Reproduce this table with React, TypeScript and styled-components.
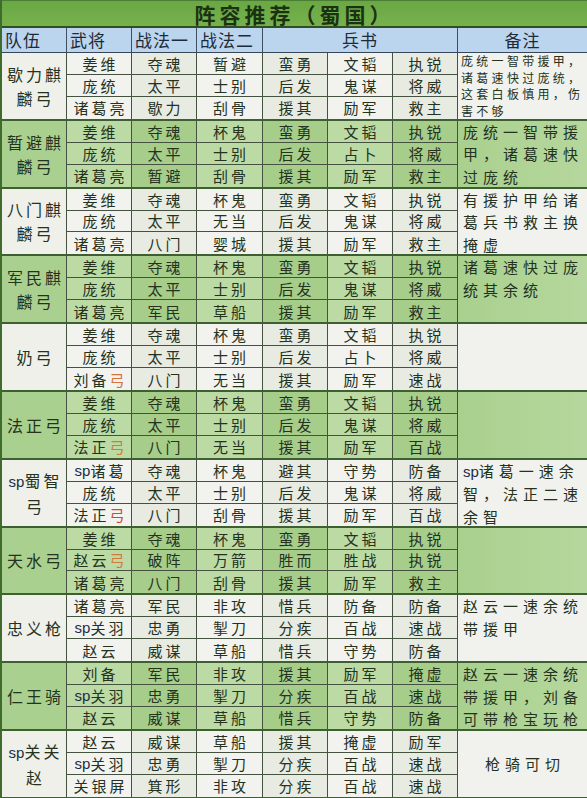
import React from 'react'
import styled, { createGlobalStyle } from 'styled-components'

const GlobalStyle = createGlobalStyle`
  html, body {
    margin: 0;
    padding: 0;
    background: #f1f2ed;
  }
  body {
    font-family: 'Noto Sans CJK SC', 'Noto Sans', sans-serif;
  }
`

const COLS = '65px 65px 65px 66px 65px 65px 65px 1fr'

type Tone = 'white' | 'green'

type Squad = {
  team: string[]
  tone: Tone
  rows: string[][]
  note?: string[]
  noteSmall?: boolean
  noteCenter?: boolean
}

const squads: Squad[] = [
  {
    team: ['歇力麒', '麟弓'],
    tone: 'white',
    rows: [
      ['姜维', '夺魂', '暂避', '蛮勇', '文韬', '执锐'],
      ['庞统', '太平', '士别', '后发', '鬼谋', '将威'],
      ['诸葛亮', '歇力', '刮骨', '援其', '励军', '救主'],
    ],
    note: ['庞统一智带援甲，', '诸葛速快过庞统，', '这套白板慎用，伤', '害不够'],
    noteSmall: true,
  },
  {
    team: ['暂避麒', '麟弓'],
    tone: 'green',
    rows: [
      ['姜维', '夺魂', '杯鬼', '蛮勇', '文韬', '执锐'],
      ['庞统', '太平', '士别', '后发', '占卜', '将威'],
      ['诸葛亮', '暂避', '刮骨', '援其', '励军', '救主'],
    ],
    note: ['庞统一智带援', '甲，诸葛速快', '过庞统'],
  },
  {
    team: ['八门麒', '麟弓'],
    tone: 'white',
    rows: [
      ['姜维', '夺魂', '杯鬼', '蛮勇', '文韬', '执锐'],
      ['庞统', '太平', '无当', '后发', '鬼谋', '将威'],
      ['诸葛亮', '八门', '婴城', '援其', '励军', '救主'],
    ],
    note: ['有援护甲给诸', '葛兵书救主换', '掩虚'],
  },
  {
    team: ['军民麒', '麟弓'],
    tone: 'green',
    rows: [
      ['姜维', '夺魂', '杯鬼', '蛮勇', '文韬', '执锐'],
      ['庞统', '太平', '士别', '后发', '鬼谋', '将威'],
      ['诸葛亮', '军民', '草船', '援其', '励军', '救主'],
    ],
    note: ['诸葛速快过庞', '统其余统'],
  },
  {
    team: ['奶弓'],
    tone: 'white',
    rows: [
      ['姜维', '夺魂', '杯鬼', '蛮勇', '文韬', '执锐'],
      ['庞统', '太平', '士别', '后发', '占卜', '将威'],
      ['刘备弓', '八门', '无当', '援其', '励军', '速战'],
    ],
  },
  {
    team: ['法正弓'],
    tone: 'green',
    rows: [
      ['姜维', '夺魂', '杯鬼', '蛮勇', '文韬', '执锐'],
      ['庞统', '太平', '士别', '后发', '鬼谋', '将威'],
      ['法正弓', '八门', '无当', '援其', '励军', '百战'],
    ],
  },
  {
    team: ['sp蜀智', '弓'],
    tone: 'white',
    rows: [
      ['sp诸葛', '夺魂', '杯鬼', '避其', '守势', '防备'],
      ['庞统', '太平', '士别', '后发', '鬼谋', '将威'],
      ['法正弓', '八门', '刮骨', '援其', '励军', '百战'],
    ],
    note: ['sp诸葛一速余', '智，法正二速', '余智'],
  },
  {
    team: ['天水弓'],
    tone: 'green',
    rows: [
      ['姜维', '夺魂', '杯鬼', '蛮勇', '文韬', '执锐'],
      ['赵云弓', '破阵', '万箭', '胜而', '胜战', '执锐'],
      ['诸葛亮', '八门', '刮骨', '援其', '励军', '救主'],
    ],
  },
  {
    team: ['忠义枪'],
    tone: 'white',
    rows: [
      ['诸葛亮', '军民', '非攻', '惜兵', '防备', '防备'],
      ['sp关羽', '忠勇', '掣刀', '分疾', '百战', '速战'],
      ['赵云', '威谋', '草船', '惜兵', '守势', '防备'],
    ],
    note: ['赵云一速余统', '带援甲'],
  },
  {
    team: ['仁王骑'],
    tone: 'green',
    rows: [
      ['刘备', '军民', '非攻', '援其', '励军', '掩虚'],
      ['sp关羽', '忠勇', '掣刀', '分疾', '百战', '速战'],
      ['赵云', '威谋', '草船', '惜兵', '守势', '防备'],
    ],
    note: ['赵云一速余统', '带援甲，刘备', '可带枪宝玩枪'],
  },
  {
    team: ['sp关关', '赵'],
    tone: 'white',
    rows: [
      ['赵云', '威谋', '草船', '援其', '掩虚', '励军'],
      ['sp关羽', '忠勇', '掣刀', '分疾', '百战', '速战'],
      ['关银屏', '箕形', '非攻', '分疾', '百战', '速战'],
    ],
    note: ['枪骑可切'],
    noteCenter: true,
  },
]

const Page = styled.div`
  width: 587px;
  height: 798px;
  display: flex;
  flex-direction: column;
  overflow: hidden;
  border-left: 2px solid #3f6b2c;
  box-sizing: border-box;
  color: #24321e;
`

const TitleBar = styled.div`
  height: 28px;
  flex: none;
  box-sizing: border-box;
  display: flex;
  align-items: center;
  justify-content: center;
  background: linear-gradient(#6aa843, #76b14c);
  border-top: 1px solid #4c7d34;
  border-bottom: 2px solid #2f4f22;
  font-size: 21px;
  line-height: 24px;
  font-weight: 700;
  letter-spacing: 4px;
  color: #1b3212;
`

const HeaderRow = styled.div`
  height: 25px;
  flex: none;
  box-sizing: border-box;
  display: grid;
  grid-template-columns: ${COLS};
  background: #bcd5ee;
  border-bottom: 1px solid #36475a;
`

const HeadCell = styled.div<{ $span?: number; $center?: boolean }>`
  grid-column: span ${(p) => p.$span ?? 1};
  display: flex;
  align-items: center;
  justify-content: ${(p) => (p.$center ? 'center' : 'flex-start')};
  padding-left: ${(p) => (p.$center ? '0' : '3px')};
  border-right: 1px solid #3e4f60;
  font-size: 17px;
  line-height: 20px;
  letter-spacing: 1px;
  color: #1d2b38;
  &:last-child {
    border-right: none;
  }
`

const Group = styled.div`
  height: 67.8px;
  flex: none;
  box-sizing: border-box;
  display: grid;
  grid-template-columns: ${COLS};
  grid-template-rows: repeat(3, minmax(0, 1fr));
  border-bottom: 2px solid #3d5f31;
`

const TeamCell = styled.div<{ $tone: Tone }>`
  grid-row: 1 / span 3;
  grid-column: 1;
  display: flex;
  flex-direction: column;
  align-items: center;
  justify-content: center;
  background: ${(p) => (p.$tone === 'green' ? '#a9d08e' : '#eef0e9')};
  border-right: 1px solid #44523f;
  font-size: 16px;
  line-height: 24px;
  letter-spacing: 3px;
  padding-left: 3px;
`

const Cell = styled.div<{ $tone: Tone; $alt: boolean; $last: boolean }>`
  display: flex;
  align-items: center;
  justify-content: center;
  min-height: 0;
  white-space: nowrap;
  background: ${(p) =>
    p.$tone === 'green'
      ? p.$alt
        ? '#a6cd8a'
        : '#bcdba4'
      : p.$alt
        ? '#e8ebe2'
        : '#f2f3ee'};
  border-right: 1px solid #44523f;
  border-bottom: ${(p) => (p.$last ? 'none' : '1px solid #44523f')};
  font-size: 15px;
  line-height: 1;
  letter-spacing: 3px;
  padding-left: 3px;
`

const Sp = styled.span`
  font-family: 'Liberation Sans', Arial, sans-serif;
  font-size: 15px;
  letter-spacing: 0;
  color: #1d2c48;
`

const Bow = styled.span<{ $color: string }>`
  color: ${(p) => p.$color};
`

const NoteCell = styled.div<{ $tone: Tone; $small?: boolean; $center?: boolean }>`
  grid-row: 1 / span 3;
  grid-column: 8;
  min-height: 0;
  display: flex;
  flex-direction: column;
  justify-content: ${(p) => (p.$center ? 'center' : 'flex-start')};
  align-items: ${(p) => (p.$center ? 'center' : 'flex-start')};
  padding: ${(p) => (p.$small ? '0 0 0 3px' : '0 0 0 5px')};
  background: ${(p) =>
    p.$tone === 'green' ? 'linear-gradient(90deg, #a9d08e, #b6d79d)' : '#f1f2ed'};
  font-size: ${(p) => (p.$small ? '12px' : '15px')};
  line-height: ${(p) => (p.$small ? '16.5px' : '22.5px')};
  letter-spacing: ${(p) => (p.$small ? '3.3px' : '5px')};
  white-space: nowrap;
`

const renderName = (name: string, tone: Tone, squadIndex: number) => {
  const parts: React.ReactNode[] = []
  let rest = name
  if (rest.startsWith('sp')) {
    parts.push(<Sp key="sp">sp</Sp>)
    rest = rest.slice(2)
  }
  if (rest.length === 3 && rest.endsWith('弓')) {
    const color = squadIndex === 6 ? '#d2473a' : tone === 'green' ? '#cf7b3c' : '#d5703f'
    parts.push(rest.slice(0, 2))
    parts.push(
      <Bow key="bow" $color={color}>
        弓
      </Bow>,
    )
  } else {
    parts.push(rest)
  }
  return parts
}

const renderTeam = (line: string, i: number) =>
  line.startsWith('sp') ? (
    <div key={i}>
      <Sp>sp</Sp>
      {line.slice(2)}
    </div>
  ) : (
    <div key={i}>{line}</div>
  )

const App = () => (
  <>
    <GlobalStyle />
    <Page>
      <TitleBar>阵容推荐（蜀国）</TitleBar>
      <HeaderRow>
        <HeadCell>队伍</HeadCell>
        <HeadCell>武将</HeadCell>
        <HeadCell>战法一</HeadCell>
        <HeadCell>战法二</HeadCell>
        <HeadCell $span={3} $center>
          兵书
        </HeadCell>
        <HeadCell $center>备注</HeadCell>
      </HeaderRow>
      {squads.map((s, si) => (
        <Group key={si}>
          <TeamCell $tone={s.tone}>{s.team.map(renderTeam)}</TeamCell>
          {s.rows.map((row, ri) =>
            row.map((text, ci) => (
              <Cell
                key={`${ri}-${ci}`}
                $tone={s.tone}
                $alt={ci % 2 === 1}
                $last={ri === 2}
                style={{ gridRow: ri + 1, gridColumn: ci + 2 }}
              >
                {ci === 0 ? renderName(text, s.tone, si) : text}
              </Cell>
            )),
          )}
          <NoteCell $tone={s.tone} $small={s.noteSmall} $center={s.noteCenter}>
            {(s.note ?? []).map(renderTeam)}
          </NoteCell>
        </Group>
      ))}
    </Page>
  </>
)

export default App
